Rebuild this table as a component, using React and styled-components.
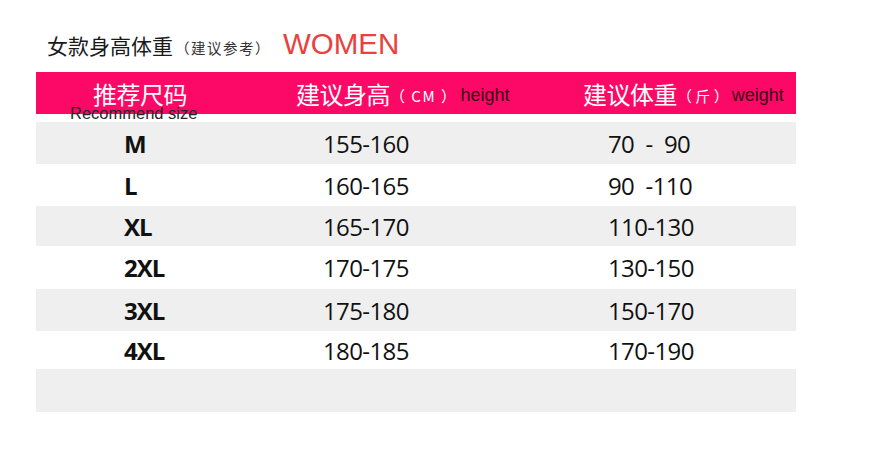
import React from "react";
import styled, { createGlobalStyle } from "styled-components";

const rows = [
  { size: "M", height: "155-160", weight: "70  -  90", h: 42 },
  { size: "L", height: "160-165", weight: "90  -110", h: 42 },
  { size: "XL", height: "165-170", weight: "110-130", h: 40 },
  { size: "2XL", height: "170-175", weight: "130-150", h: 43 },
  { size: "3XL", height: "175-180", weight: "150-170", h: 42 },
  { size: "4XL", height: "180-185", weight: "170-190", h: 38 },
];

const SizeChart = () => {
  return (
    <Page>
      <Title>
        <TitleCn>女款身高体重</TitleCn>
        <TitleNote>（建议参考）</TitleNote>
        <TitleEn>WOMEN</TitleEn>
      </Title>
      <Header>
        <HeadCell>
          <HeadCn>推荐尺码</HeadCn>
          <Caption>Recommend size</Caption>
        </HeadCell>
        <HeadCell>
          <HeadCn>建议身高</HeadCn>
          <HeadUnit $spacing={1.5}>（ CM ）</HeadUnit>
          <HeadEn>height</HeadEn>
        </HeadCell>
        <HeadCell>
          <HeadCn>建议体重</HeadCn>
          <HeadUnit $spacing={0}>（ 斤 ）</HeadUnit>
          <HeadEn>weight</HeadEn>
        </HeadCell>
      </Header>
      <Table>
        {rows.map((r, i) => (
          <Row key={r.size} $shade={i % 2 === 0} $h={r.h}>
            <SizeCell>{r.size}</SizeCell>
            <NumCell>{r.height}</NumCell>
            <NumCell>{r.weight}</NumCell>
          </Row>
        ))}
        <Row $shade $h={43} />
      </Table>
    </Page>
  );
};

const GlobalStyle = createGlobalStyle`
  body {
    margin: 0;
    background: #fff;
    font-family: "Noto Sans CJK SC", "Noto Sans", sans-serif;
  }
`;

const Page = styled.div`
  width: 870px;
  height: 456px;
  padding-left: 36px;
  box-sizing: border-box;
`;

const Title = styled.div`
  display: flex;
  align-items: baseline;
  height: 72px;
  padding-left: 11px;
  padding-top: 29px;
  box-sizing: border-box;
  line-height: 1;
`;

const TitleCn = styled.span`
  font-size: 21px;
  color: #1a1a1a;
`;

const TitleNote = styled.span`
  font-size: 14.5px;
  color: #333;
  letter-spacing: 1.5px;
  margin-left: 2px;
  margin-right: 12px;
`;

const TitleEn = styled.span`
  font-family: "Liberation Sans", Arial, sans-serif;
  font-size: 29.5px;
  color: #e8423d;
`;

const Header = styled.div`
  display: grid;
  grid-template-columns: 203px 287px 1fr;
  width: 760px;
  height: 42px;
  background: #fc0866;
  padding-left: 57px;
  box-sizing: border-box;
  margin-bottom: 8px;
`;

const HeadCell = styled.div`
  position: relative;
  display: flex;
  align-items: center;
  white-space: nowrap;
`;

const HeadCn = styled.span`
  font-size: 24px;
  color: #fff;
  letter-spacing: -0.5px;
`;

const HeadUnit = styled.span`
  font-size: 15px;
  color: #fff;
  letter-spacing: ${(p) => p.$spacing}px;
  margin-top: 4px;
`;

const HeadEn = styled.span`
  font-family: "Liberation Sans", Arial, sans-serif;
  font-size: 18px;
  color: #3d0616;
  margin-left: 3px;
  margin-top: 4px;
`;

const Caption = styled.span`
  position: absolute;
  left: -23px;
  top: 33px;
  font-family: "Liberation Sans", Arial, sans-serif;
  font-size: 16.5px;
  line-height: 16px;
  color: #262626;
`;

const Table = styled.div`
  width: 760px;
`;

const Row = styled.div`
  display: grid;
  grid-template-columns: 199px 285px 1fr;
  align-items: center;
  height: ${(p) => p.$h}px;
  background: ${(p) => (p.$shade ? "#efefef" : "#fff")};
  padding-left: 88px;
  box-sizing: border-box;
  font-family: "Open Sans", sans-serif;
  font-size: 24px;
  color: #111;
`;

const SizeCell = styled.div`
  font-weight: 700;
  letter-spacing: -1px;
`;

const NumCell = styled.div`
  letter-spacing: -0.6px;
  white-space: pre;
`;

export default function App() {
  return (
    <>
      <GlobalStyle />
      <SizeChart />
    </>
  );
}
